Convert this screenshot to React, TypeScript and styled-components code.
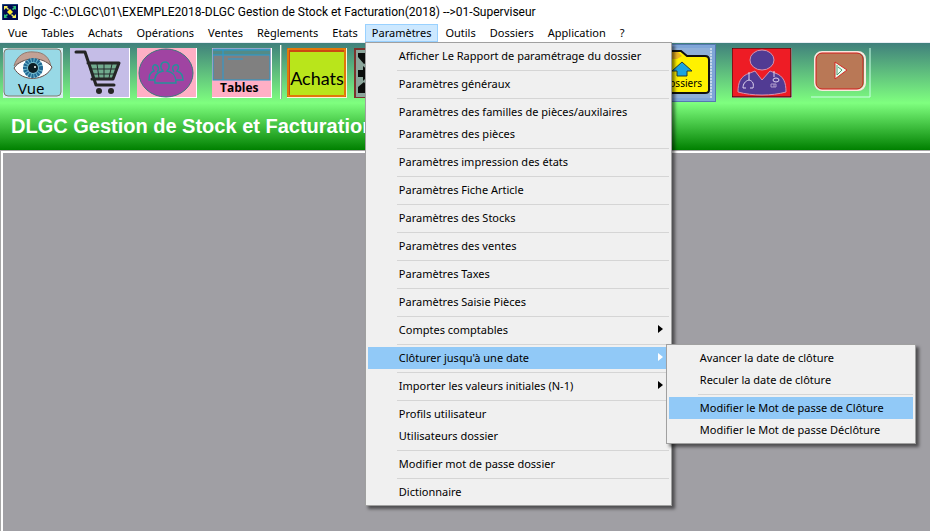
import React from "react";
import styled, { createGlobalStyle, css } from "styled-components";

const GlobalStyle = createGlobalStyle`
  * { box-sizing: border-box; }
  html, body, #root { height: 100%; }
  body {
    margin: 0;
    overflow: hidden;
    font-family: "Noto Sans", "Open Sans", sans-serif;
    font-size: 11px;
    color: #000;
  }
  button { font: inherit; color: inherit; border: 0; background: none; padding: 0; }
`;

const Window = styled.div`
  display: flex;
  flex-direction: column;
  height: 100%;
  min-height: 100vh;
  background: #fff;
`;

const TitleBar = styled.header`
  display: flex;
  align-items: center;
  gap: 5px;
  height: 24px;
  padding-left: 2px;
  white-space: nowrap;
`;

const AppTitle = styled.h1`
  margin: 0;
  font-family: Roboto, "Open Sans", sans-serif;
  font-size: 12px;
  font-weight: 400;
`;

const MenuBar = styled.nav`
  display: flex;
  height: 19px;
  padding-left: 1px;
  border-bottom: 1px solid #e8eef4;
`;

const MenuSlot = styled.div`
  position: relative;
`;

const MenuTitle = styled.button<{ $open?: boolean }>`
  height: 18px;
  padding: 0 7px;
  line-height: 18px;
  white-space: nowrap;
  ${(p) => p.$open && css`
    background: #cce8ff;
    box-shadow: inset 0 0 0 1px #99d1ff;
  `}
`;

const Popup = styled.ul`
  position: absolute;
  z-index: 5;
  top: 18px;
  left: 0;
  min-width: 307px;
  margin: 0;
  padding: 2px;
  list-style: none;
  background: #f0f0f0;
  border: 1px solid #a0a0a0;
  box-shadow: 3px 3px 3px rgba(0, 0, 0, 0.5);
`;

const SubPopup = styled(Popup)`
  top: -3px;
  left: calc(100% - 3px);
  min-width: 250px;
`;

const Entry = styled.li`
  position: relative;
`;

const EntryButton = styled.button<{ $active?: boolean }>`
  display: flex;
  align-items: center;
  justify-content: space-between;
  width: 100%;
  height: 22px;
  padding: 0 6px 2px 31px;
  text-align: left;
  white-space: nowrap;
  background: ${(p) => (p.$active ? "#91c9f7" : "transparent")};
`;

const Arrow = styled.svg<{ $light?: boolean }>`
  width: 5px;
  height: 8px;
  fill: ${(p) => (p.$light ? "#fff" : "#000")};
`;

const Divider = styled.li`
  height: 6px;
  padding: 3px 0 2px 29px;
  &::before {
    content: "";
    display: block;
    height: 1px;
    background: #d5d5d5;
  }
`;

const ToolBar = styled.div`
  display: flex;
  align-items: flex-start;
  height: 60px;
  padding: 5px 3px 0;
  overflow: hidden;
  background: linear-gradient(#40807c, #7fff7f);
`;

const ToolGroup = styled.div<{ $before?: number }>`
  display: flex;
  gap: 7px;
  margin-left: ${(p) => p.$before ?? 0}px;
`;

const Tool = styled.button<{ $framed?: boolean }>`
  flex: none;
  display: block;
  height: 50px;
  ${(p) => p.$framed && css`
    box-shadow: 0 0 0 3px #7fa6d8, 0 0 0 4px #5578b0;
  `}
  svg { display: block; }
`;

const ToolSeparator = styled.div`
  flex: none;
  width: 2px;
  height: 54px;
  margin: -3px 5px 0 8px;
  background: linear-gradient(to right, #f4fff4 50%, #8fae9c 50%);
`;

const Banner = styled.div`
  height: 47px;
  padding-left: 11px;
  overflow: hidden;
  background: linear-gradient(#7fff7f, #008000);
`;

const BannerTitle = styled.h2`
  margin: 0;
  font: 700 20px/46px "Liberation Sans", Arial, sans-serif;
  color: #fff;
  white-space: nowrap;
`;

const Workspace = styled.main`
  flex: 1;
  padding: 0;
  background: #a09fa4;
  border-top: 2px solid #fff;
  border-left: 2px solid #fff;
  margin: 1px 0 0 1px;
`;

const Frame = styled.div`
  flex: 1;
  display: flex;
  flex-direction: column;
  background: #a6a6a6;
`;

const Icon = ({ children }: { children: React.ReactNode }) => (
  <svg width="60" height="50" viewBox="0 0 60 50" aria-hidden="true">{children}</svg>
);

const AppIcon = () => (
  <svg width="16" height="16" viewBox="0 0 16 16" aria-hidden="true">
    <rect width="16" height="16" fill="#000850" />
    <path d="M0 16V0h16" fill="none" stroke="#3978a0" />
    <path d="M8 5l3 3-3 3-3-3z" fill="#ffe92e" />
    <path d="M2 2h4L5 3l2 2-1 1-2-2-2 2zM14 14h-4l1-1-2-2 1-1 2 2 2-2z" fill="#f7ef5d" />
    <path d="M14 2v4l-1-1-2 1-1-1 2-2-2-1zM2 14v-4l1 1 2-1 1 1-2 2 2 1z" fill="#2dbd78" />
  </svg>
);

const EyeIcon = () => (
  <Icon>
    <rect width="60" height="50" fill="#d8eef0" />
    <rect x="1" y="1" width="57" height="47" rx="4" fill="#98d9e6" stroke="#82796f" />
    <path d="M11 18C14 7 22 3 31 4c10 0 16 6 17 15-10-9-25-10-37-1z" fill="#c2a195" stroke="#917c72" />
    <path d="M11 20c8-11 28-13 38-1-6 14-30 16-38 1z" fill="#fff" stroke="#654f49" />
    <circle cx="30" cy="20" r="10" fill="#70b8cb" />
    <circle cx="30" cy="20" r="8" fill="none" stroke="#216894" strokeWidth="4" strokeDasharray="2 1" />
    <circle cx="30" cy="20" r="5" fill="#0c1c23" />
    <circle cx="32" cy="19" r="1" fill="#fff" />
    <text x="15" y="46" fontFamily="Noto Sans" fontSize="15">Vue</text>
  </Icon>
);

const CartIcon = () => (
  <Icon>
    <rect width="60" height="50" fill="#fff" />
    <rect width="59" height="49" fill="#c5bde7" />
    <path d="M18 15h30l-5 16H22z" fill="#71aa8d" />
    <path d="M27 16l2 14M34 16v14M42 16l-3 14M20 21h27M21 26h24" stroke="#272a2d" strokeWidth="1" />
    <path d="M6 4h9l11 33h18M18 15h31l-6 16H22" fill="none" stroke="#252525" strokeWidth="3" strokeLinecap="round" strokeLinejoin="round" />
    <circle cx="29" cy="43" r="3" fill="#252525" />
    <circle cx="41" cy="43" r="3" fill="#252525" />
  </Icon>
);

const PeopleIcon = () => (
  <Icon>
    <rect width="60" height="50" fill="#fff" />
    <rect width="59" height="49" fill="#ffafc5" />
    <ellipse cx="29" cy="25" rx="27" ry="24" fill="#a044a2" stroke="#3f777d" />
    <g fill="none" stroke="#25919b" strokeWidth="1.4">
      <path d="M18 35c-1-7 2-11 8-12-4-4-2-9 2-9s6 5 2 9c6 1 9 4 9 12z" />
      <path d="M18 32h-6c0-6 2-8 5-9-3-4 0-7 2-6s4 4 1 7M39 32h7c0-6-3-8-6-9 3-4 1-7-2-6s-3 4-1 7" />
    </g>
  </Icon>
);

const TablesIcon = () => (
  <Icon>
    <rect width="60" height="50" fill="#fff" />
    <rect width="59" height="49" fill="#ffafc5" />
    <rect x="1" y="1" width="57" height="31" fill="#808080" stroke="#249ad0" />
    <path d="M1 2h57v5H1z" fill="#538b87" />
    <path d="M1 2h57M1 7h57M11 2v30M16 11h15" stroke="#279bd4" />
    <text x="8" y="44" fontFamily="Open Sans" fontWeight="700" fontSize="12">Tables</text>
  </Icon>
);

const PurchaseIcon = () => (
  <Icon>
    <rect width="60" height="50" fill="#fff3d7" />
    <rect x="0" y="0" width="59" height="49" fill="#cc4912" />
    <rect x="1" y="1" width="57" height="47" fill="none" stroke="#f7a700" />
    <rect x="3" y="4" width="54" height="43" fill="#b9e51b" />
    <text x="30" y="37" textAnchor="middle" fontFamily="Lato" fontSize="18">Achats</text>
  </Icon>
);

const TransferIcon = () => (
  <Icon>
    <rect width="60" height="50" fill="#7d332d" />
    <rect x="2" y="2" width="57" height="47" fill="#8ba69b" />
    <path d="M4 5h14v13l-4-4-4 2-6-7zM4 22h5v-4l8 7-8 8v-4H4zM18 45H4v-6l6-5 2 3 6-5z" fill="#0b0e0c" />
  </Icon>
);

const FolderIcon = () => (
  <Icon>
    <rect width="60" height="50" fill="#8fb0d8" />
    <path d="M59 0v50" stroke="#fff" strokeDasharray="2 1" />
    <path d="M2 45V3h27l6 5h18q4 0 4 4v30q0 3-4 3z" fill="#fff100" stroke="#111" strokeWidth="2" />
    <path d="M4 11h21l5-3-4-4H4z" fill="#eeb422" />
    <path d="M30 14l10 9h-5v5H25v-5h-5z" fill="#1ba4df" stroke="#263c35" />
    <text x="10" y="39" fontFamily="Noto Sans" fontSize="10">Dossiers</text>
  </Icon>
);

const DoctorIcon = () => (
  <Icon>
    <rect width="60" height="50" fill="#f5e7e7" />
    <rect x="0" y="0" width="59" height="49" fill="#ee1c25" stroke="#1a0808" />
    <path d="M6 44c0-9 2-16 12-19l5-2 7 9 8-9 5 2c9 3 11 10 11 19-14 4-34 4-48 0z" fill="#513b93" stroke="#d394b0" />
    <ellipse cx="30" cy="12" rx="12" ry="10" fill="#513b93" stroke="#d394b0" />
    <path d="M17 24v8c-4 1-6 4-6 8h3M17 32c4 1 5 4 4 8h-3M42 23v6" fill="none" stroke="#dfd5ef" strokeWidth="1" />
    <ellipse cx="44" cy="32" rx="3" ry="2" fill="none" stroke="#dfd5ef" />
    <path d="M39 36h5v3h-5zM42 36v3" fill="none" stroke="#b19ecd" />
  </Icon>
);

const VideoIcon = () => (
  <Icon>
    <path d="M59 0v49H0" fill="none" stroke="#c9ffe5" />
    <rect x="4" y="4" width="50" height="38" rx="7" fill="none" stroke="#f8e9df" strokeWidth="2" />
    <rect x="5" y="5" width="47" height="36" rx="6" fill="#b97856" stroke="#d41c1b" strokeWidth="1" />
    <path d="M24 14v17l12-9z" fill="#e8fff0" stroke="#d72925" />
    <path d="M26 17v10l5-5-4-3" fill="none" stroke="#559874" />
  </Icon>
);

type Item = { label: string; more?: boolean; active?: boolean; sub?: Item[][] };

const parameterMenu: Item[][] = [
  [{ label: "Afficher Le Rapport de paramétrage du dossier" }],
  [{ label: "Paramètres généraux" }],
  [{ label: "Paramètres des familles de pièces/auxilaires" }, { label: "Paramètres des pièces" }],
  [{ label: "Paramètres impression des états" }],
  [{ label: "Paramètres Fiche Article" }],
  [{ label: "Paramètres des Stocks" }],
  [{ label: "Paramètres des ventes" }],
  [{ label: "Paramètres Taxes" }],
  [{ label: "Paramètres Saisie Pièces" }],
  [{ label: "Comptes comptables", more: true }],
  [{
    label: "Clôturer jusqu'à une date",
    more: true,
    active: true,
    sub: [
      [{ label: "Avancer la date de clôture" }, { label: "Reculer la date de clôture" }],
      [{ label: "Modifier le Mot de passe de Clôture", active: true }, { label: "Modifier le Mot de passe Déclôture" }],
    ],
  }],
  [{ label: "Importer les valeurs initiales (N-1)", more: true }],
  [{ label: "Profils utilisateur" }, { label: "Utilisateurs dossier" }],
  [{ label: "Modifier mot de passe dossier" }],
  [{ label: "Dictionnaire" }],
];

const menus = ["Vue", "Tables", "Achats", "Opérations", "Ventes", "Règlements", "Etats", "Paramètres", "Outils", "Dossiers", "Application", "?"];

const Entries = ({ groups }: { groups: Item[][] }) => (
  <>
    {groups.map((group, i) => (
      <React.Fragment key={group[0].label}>
        {i > 0 && <Divider role="separator" />}
        {group.map((item) => (
          <Entry key={item.label} role="none">
            <EntryButton role="menuitem" $active={item.active}>
              {item.label}
              {item.more && (
                <Arrow $light={item.active} viewBox="0 0 5 8" aria-hidden="true">
                  <path d="M0 0l5 4-5 4z" />
                </Arrow>
              )}
            </EntryButton>
            {item.sub && <SubPopup role="menu"><Entries groups={item.sub} /></SubPopup>}
          </Entry>
        ))}
      </React.Fragment>
    ))}
  </>
);

export default function App() {
  return (
    <Window>
      <GlobalStyle />
      <TitleBar>
        <AppIcon />
        <AppTitle>Dlgc -C:\DLGC\01\EXEMPLE2018-DLGC Gestion de Stock et Facturation(2018) --&gt;01-Superviseur</AppTitle>
      </TitleBar>
      <MenuBar>
        {menus.map((name) => (
          <MenuSlot key={name}>
            <MenuTitle $open={name === "Paramètres"}>{name}</MenuTitle>
            {name === "Paramètres" && <Popup role="menu"><Entries groups={parameterMenu} /></Popup>}
          </MenuSlot>
        ))}
      </MenuBar>
      <ToolBar>
        <ToolGroup>
          <Tool aria-label="Vue"><EyeIcon /></Tool>
          <Tool aria-label="Ventes"><CartIcon /></Tool>
          <Tool aria-label="Tiers"><PeopleIcon /></Tool>
        </ToolGroup>
        <ToolGroup $before={15}>
          <Tool aria-label="Tables"><TablesIcon /></Tool>
        </ToolGroup>
        <ToolSeparator />
        <ToolGroup>
          <Tool aria-label="Achats"><PurchaseIcon /></Tool>
          <Tool aria-label="Transferts"><TransferIcon /></Tool>
        </ToolGroup>
        <ToolGroup $before={238}>
          <Tool aria-label="Dossiers" $framed><FolderIcon /></Tool>
        </ToolGroup>
        <ToolGroup $before={20}>
          <Tool aria-label="Assistance"><DoctorIcon /></Tool>
        </ToolGroup>
        <ToolGroup $before={19}>
          <Tool aria-label="Vidéos"><VideoIcon /></Tool>
        </ToolGroup>
      </ToolBar>
      <Banner>
        <BannerTitle>DLGC Gestion de Stock et Facturation</BannerTitle>
      </Banner>
      <Frame>
        <Workspace />
      </Frame>
    </Window>
  );
}
